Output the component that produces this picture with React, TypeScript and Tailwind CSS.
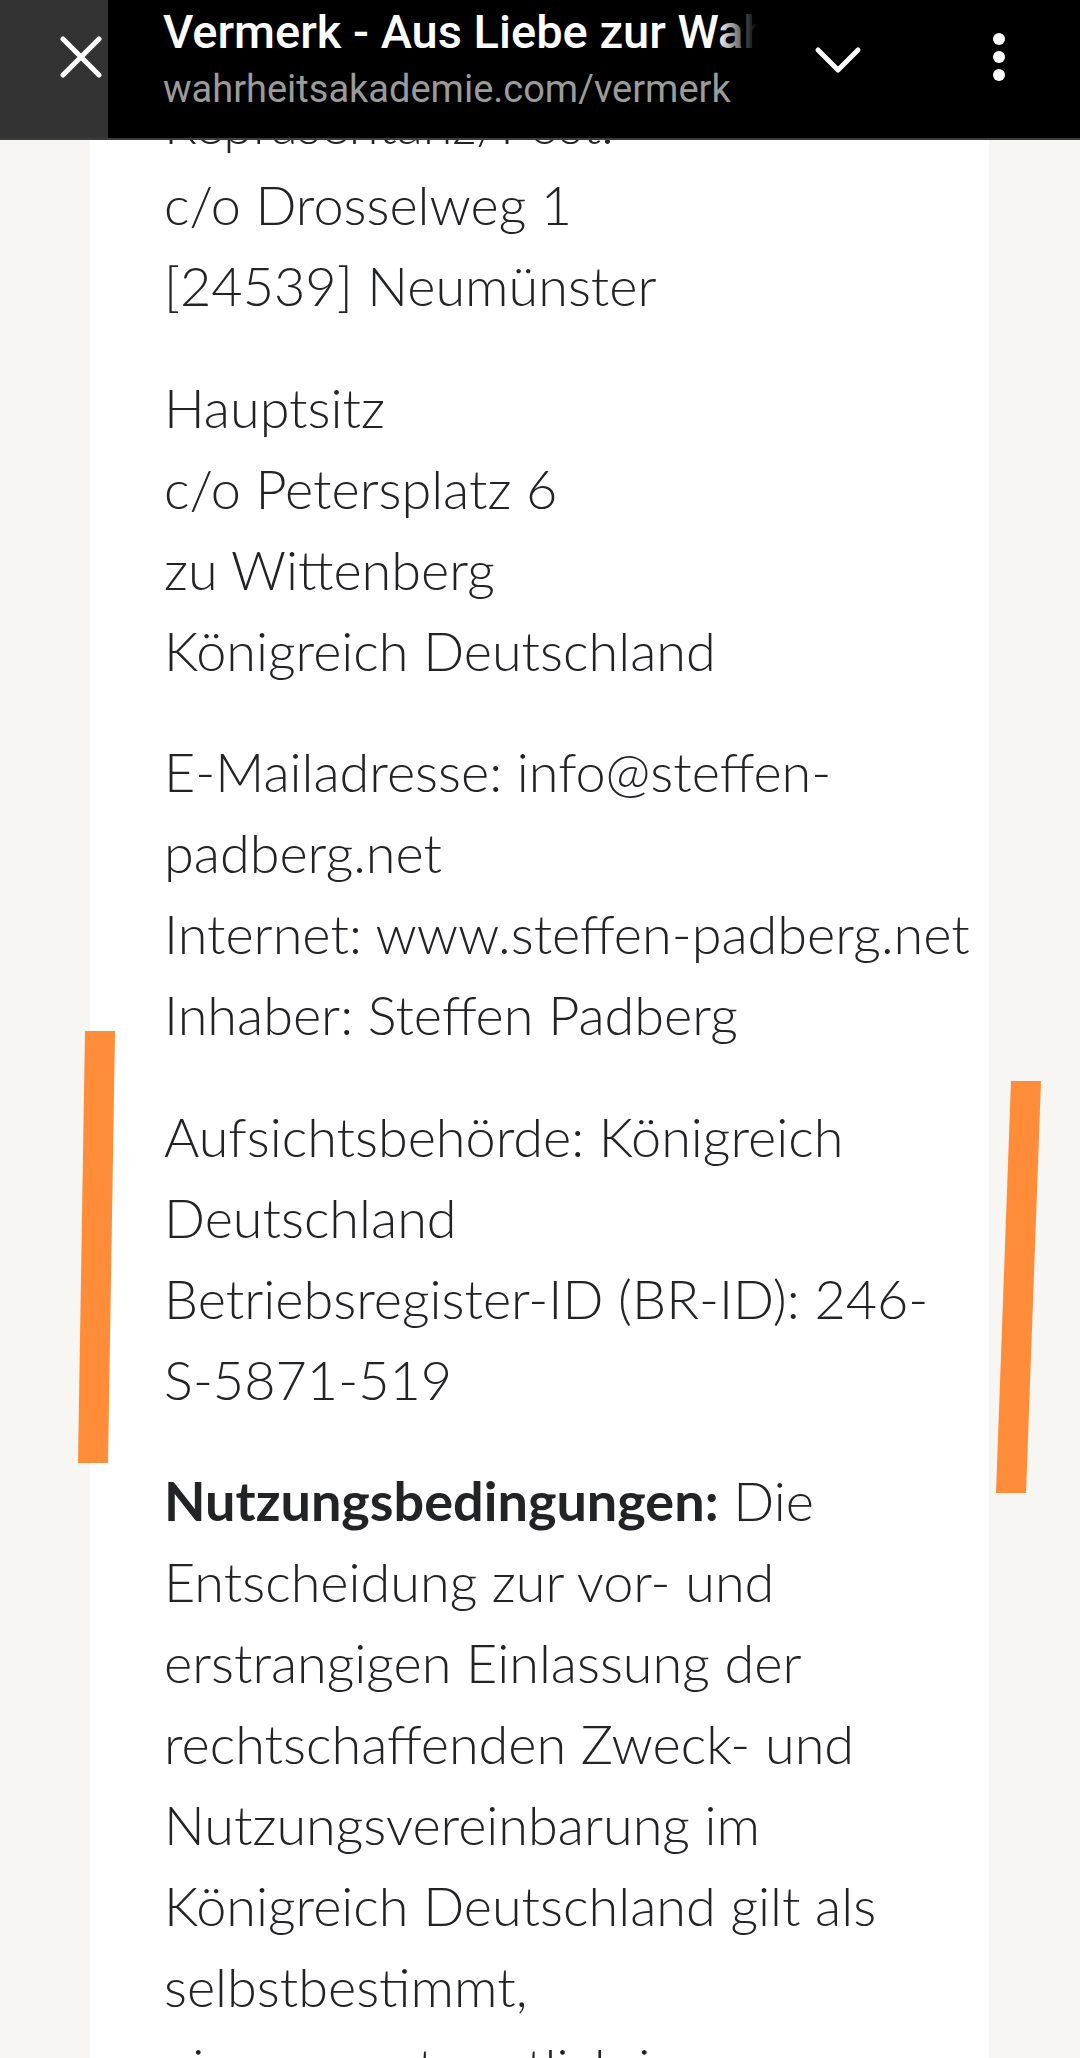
import React from 'react';

const paragraphs: React.ReactNode[][] = [
  ['Repräsentanz/Post:', 'c/o Drosselweg 1', '[24539] Neumünster'],
  ['Hauptsitz', 'c/o Petersplatz 6', 'zu Wittenberg', 'Königreich Deutschland'],
  ['E-Mailadresse: info@steffen-', 'padberg.net', 'Internet: www.steffen-padberg.net', 'Inhaber: Steffen Padberg'],
  ['Aufsichtsbehörde: Königreich', 'Deutschland', 'Betriebsregister-ID (BR-ID): 246-', 'S-5871-519'],
  [
    <>
      <strong className="font-bold">Nutzungsbedingungen:</strong> Die
    </>,
    'Entscheidung zur vor- und',
    'erstrangigen Einlassung der',
    'rechtschaffenden Zweck- und',
    'Nutzungsvereinbarung im',
    'Königreich Deutschland gilt als',
    'selbstbestimmt,',
    'eigenverantwortlich in',
  ],
];

const TabBar = () => (
  <header className="absolute top-0 left-0 right-0 z-10 flex h-[140px] bg-black border-b-2 border-[#3c3c3c]">
    <button className="flex w-[108px] shrink-0 items-start justify-end bg-[#333333] pt-[36px] pr-[6px]">
      <svg width="42" height="42" viewBox="0 0 42 42" fill="none" stroke="white" strokeWidth="5" strokeLinecap="round">
        <path d="M3 3 L39 39 M39 3 L3 39" />
      </svg>
    </button>
    <div className="relative ml-[55px] w-[594px] overflow-hidden pt-[4px] font-['Roboto',sans-serif]">
      <div className="whitespace-nowrap text-[47px] leading-[56px] font-medium text-white">
        Vermerk - Aus Liebe zur Wahrheit
      </div>
      <div className="mt-[6px] whitespace-nowrap text-[38px] leading-[46px] text-[#9b9b9b]">wahrheitsakademie.com/vermerk</div>
      <div className="absolute top-0 right-0 h-[64px] w-[40px] bg-linear-to-r from-transparent to-black" />
    </div>
    <div className="ml-[57px] flex items-start pt-[46px]">
      <svg width="48" height="30" viewBox="0 0 48 30" fill="none" stroke="white" strokeWidth="5" strokeLinecap="round" strokeLinejoin="round">
        <path d="M4 4 L24 24 L44 4" />
      </svg>
    </div>
    <div className="ml-[131px] flex flex-col items-center gap-[6px] pt-[33px]">
      <span className="block h-[12px] w-[12px] rounded-full bg-white" />
      <span className="block h-[12px] w-[12px] rounded-full bg-white" />
      <span className="block h-[12px] w-[12px] rounded-full bg-white" />
    </div>
  </header>
);

export default function App() {
  return (
    <div className="relative h-[2058px] overflow-hidden bg-[#f7f6f3] font-['Lato',sans-serif]">
      <TabBar />

      <main className="ml-[90px] mr-[91px] min-h-[2058px] bg-white pl-[74px] pt-[83px]">
        {paragraphs.map((lines, i) => (
          <p key={i} className="mb-[40.5px] whitespace-nowrap text-[54px] leading-[81px] font-light text-[#222326]">
            {lines.map((line, j) => (
              <React.Fragment key={j}>
                {j > 0 && <br />}
                {line}
              </React.Fragment>
            ))}
          </p>
        ))}
      </main>

      {/* orange marker strokes drawn over the page */}
      <svg className="pointer-events-none absolute inset-0" width="1080" height="2058" viewBox="0 0 1080 2058">
        <polygon points="85,1031 115,1031 108,1463 78,1463" fill="#ff8c38" />
        <polygon points="1011,1081 1041,1081 1026,1493 996,1493" fill="#ff8c38" />
      </svg>
    </div>
  );
}
